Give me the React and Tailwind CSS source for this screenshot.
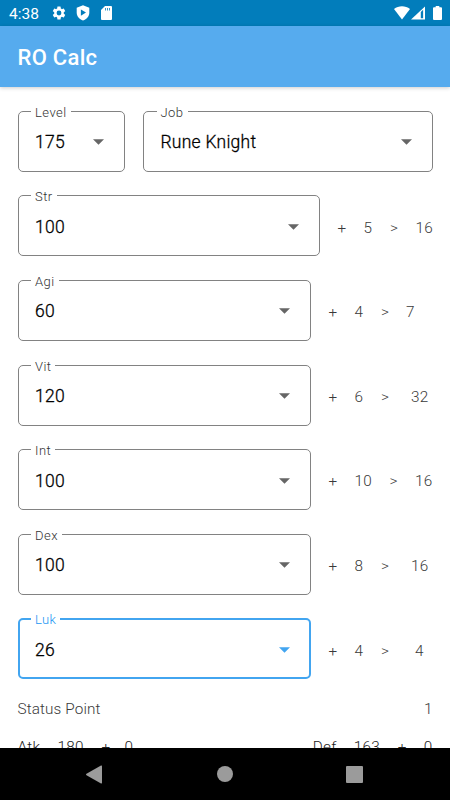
const STATS = [
  { label: 'Str', value: '100', bonus: '5', cost: '16', box: 'w-[302px]', bonusW: 'w-[26.5px]', gtW: 'w-[25.5px]' },
  { label: 'Agi', value: '60', bonus: '4', cost: '7', box: 'w-[293px]', bonusW: 'w-[26.5px]', gtW: 'w-[25px]' },
  { label: 'Vit', value: '120', bonus: '6', cost: '32', box: 'w-[293px]', bonusW: 'w-[26.5px]', gtW: 'w-[30px]' },
  { label: 'Int', value: '100', bonus: '10', cost: '16', box: 'w-[293px]', bonusW: 'w-[35px]', gtW: 'w-[25.5px]' },
  { label: 'Dex', value: '100', bonus: '8', cost: '16', box: 'w-[293px]', bonusW: 'w-[26.5px]', gtW: 'w-[30px]' },
  { label: 'Luk', value: '26', bonus: '4', cost: '4', box: 'w-[293px]', bonusW: 'w-[26.5px]', gtW: 'w-[34px]', active: true },
];

function Field({ label, value, className, active }) {
  return (
    <div
      className={`relative flex h-[61px] shrink-0 items-center justify-between rounded-[5px] pt-[2px] ${
        active ? 'border-2 border-[#42a5f0] pl-[15.5px] pr-[19px]' : 'border border-[#828282] pl-[16.5px] pr-5'
      } ${className}`}
    >
      <span
        className={`absolute left-[12.5px] bg-white px-1 text-[13px] font-light leading-4 tracking-[0.45px] ${
          active ? '-top-[8px] -ml-px text-[#2196f3]' : '-top-[7px] text-[#333]'
        }`}
      >
        {label}
      </span>
      <span className="text-[17.5px] font-light leading-6 tracking-[0.25px] text-black [-webkit-text-stroke:0.3px_black]">{value}</span>
      <svg className={`h-[6px] w-[11px] ${active ? 'text-[#42a5f0]' : 'text-[#666]'}`} viewBox="0 0 11 6" fill="currentColor">
        <path d="M0 0.3h11L5.5 5.8z" />
      </svg>
    </div>
  );
}

function StatRow({ stat }) {
  return (
    <div className="flex h-[61px] items-center">
      <Field label={stat.label} value={stat.value} className={stat.box} active={stat.active} />
      <div className="flex pl-[18px] pt-[3.5px] text-[15.3px] font-light leading-5 tracking-[0.27px] text-[#3a3a3a]">
        <span className="w-[26px]">+</span>
        <span className={stat.bonusW}>{stat.bonus}</span>
        <span className={stat.gtW}>&gt;</span>
        <span>{stat.cost}</span>
      </div>
    </div>
  );
}

function StatusBar() {
  return (
    <div className="flex h-[26px] shrink-0 items-center bg-[#027dbb] text-white">
      <span className="ml-[9px] w-[41.5px] pt-[2px] text-[15.5px] leading-5">4:38</span>
      <svg className="h-4 w-4" viewBox="0 0 24 24" fill="currentColor">
        <path d="M19.14 12.94c.04-.3.06-.61.06-.94s-.02-.64-.07-.94l2.03-1.58a.5.5 0 0 0 .12-.61l-1.92-3.32a.49.49 0 0 0-.59-.22l-2.39.96a7 7 0 0 0-1.62-.94l-.36-2.54A.48.48 0 0 0 13.92 2.4h-3.84c-.24 0-.43.17-.47.41l-.36 2.54c-.59.24-1.13.57-1.62.94l-2.39-.96a.48.48 0 0 0-.59.22L2.74 8.87c-.12.21-.08.47.12.61l2.03 1.58c-.05.3-.09.63-.09.94s.02.64.07.94l-2.03 1.58a.5.5 0 0 0-.12.61l1.92 3.32c.12.22.37.29.59.22l2.39-.96c.5.38 1.03.7 1.62.94l.36 2.54c.05.24.24.41.48.41h3.84c.24 0 .44-.17.47-.41l.36-2.54c.59-.24 1.13-.56 1.62-.94l2.39.96c.22.08.47 0 .59-.22l1.92-3.32a.49.49 0 0 0-.12-.61zM12 15.6a3.6 3.6 0 1 1 0-7.2 3.6 3.6 0 0 1 0 7.2z" />
      </svg>
      <svg className="ml-[9px] h-4 w-[14px]" viewBox="0 0 14 16">
        <path d="M7 .3 13.3 2.8V7.5c0 4-2.700 6.700-6.300 8.100C3.400 14.200.7 11.500.7 7.500V2.800z" fill="currentColor" />
        <path d="M4.900 4.400v6.400L10 7.600z" fill="#027dbb" />
      </svg>
      <svg className="ml-[11.500px] h-[14px] w-[11px]" viewBox="0 0 11 14">
        <path d="M4 0h6a1 1 0 0 1 1 1v12a1 1 0 0 1-1 1H1a1 1 0 0 1-1-1V4z" fill="currentColor" />
        <path d="M4.500 2v2.500M6.500 2v2.500M8.500 2v2.500" stroke="#027dbb" strokeWidth="0.800" />
      </svg>
      <svg className="ml-auto h-[14px] w-4" viewBox="0 0 16 14" fill="currentColor">
        <path d="M0 3C4.500-.7 11.500-.7 16 3L8 13.500z" />
      </svg>
      <svg className="ml-[1px] h-[14px] w-[14px]" viewBox="0 0 15 14">
        <path d="M15 0v14H0z" fill="currentColor" />
        <path d="M10.500 6 13 3.500v9h-2.500z" fill="#027dbb" />
      </svg>
      <svg className="ml-[8px] mr-[8px] h-[14px] w-[9px]" viewBox="0 0 9 14" fill="currentColor">
        <path d="M2.700 0h3.600v1.300H8q1 0 1 1V13q0 1-1 1H1q-1 0-1-1V2.300q0-1 1-1h1.700z" />
      </svg>
    </div>
  );
}

export default function App() {
  return (
    <div className="flex h-[800px] w-[450px] flex-col overflow-hidden bg-white font-[Roboto,sans-serif]">
      <StatusBar />
      <header className="z-10 flex h-[61px] shrink-0 items-center bg-[#56abee] pl-[17.5px] pt-px text-[22px] font-medium tracking-[0.3px] text-white shadow-[0_1px_4px_rgba(0,0,0,0.2)]">
        RO Calc
      </header>
      <main className="flex h-[661px] shrink-0 flex-col overflow-hidden pl-[17.5px] pr-[17.5px] pt-[23.8px]">
        <div className="flex flex-col gap-[23.6px]">
          <div className="flex gap-[18px]">
            <Field label="Level" value="175" className="w-[107.5px]" />
            <Field label="Job" value="Rune Knight" className="w-[289.5px]" />
          </div>
          {STATS.map((s) => (
            <StatRow key={s.label} stat={s} />
          ))}
        </div>
        <div className="mt-[19.5px] flex justify-between text-[15.3px] font-light leading-5 tracking-[0.12px] text-[#3a3a3a]">
          <span>Status Point</span>
          <span>1</span>
        </div>
        <div className="mt-[18.5px] flex text-[15.3px] font-light leading-5 tracking-[0.27px] text-[#222]">
          <span className="w-[40px]">Atk</span>
          <span className="w-[44px]">180</span>
          <span className="w-[23px]">+</span>
          <span>0</span>
          <span className="ml-auto w-[41px]">Def</span>
          <span className="w-[44px]">163</span>
          <span className="w-[26px]">+</span>
          <span>0</span>
        </div>
      </main>
      <nav className="flex h-[52px] shrink-0 items-center bg-black text-[#9b9b9b]">
        <svg className="ml-[86px] h-[19px] w-4" viewBox="0 0 16 19" fill="currentColor">
          <path d="M15 .5q1-.4 1 .7v16.600q0 1.100-1 .7L.5 10.200q-1-.7 0-1.400z" />
        </svg>
        <span className="ml-[115px] h-4 w-4 rounded-full bg-[#9b9b9b]" />
        <span className="ml-[113px] h-[17px] w-[17px] rounded-[1px] bg-[#9b9b9b]" />
      </nav>
    </div>
  );
}
